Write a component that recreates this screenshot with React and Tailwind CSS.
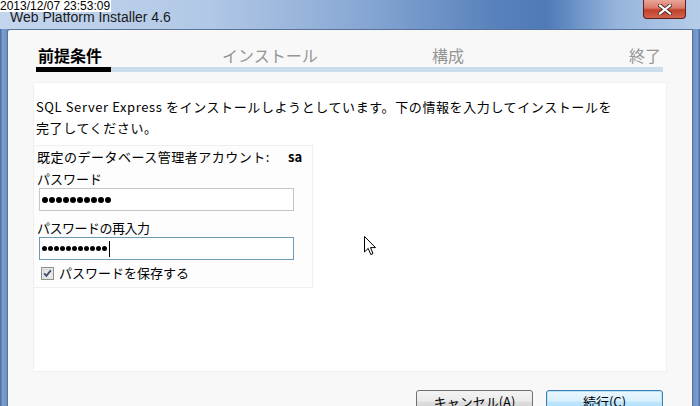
import React from "react";

const jp = "font-['Noto_Sans_CJK_JP','Noto_Sans',sans-serif]";

const Dots = ({ count, size, caret }) => (
  <div className="flex items-center gap-[1px] pl-[2px] h-full">
    {Array.from({ length: count }).map((_, i) => (
      <span key={i} className={`${size} rounded-full bg-black`} />
    ))}
    {caret && <span className="ml-[1px] w-[1px] h-[16px] bg-black" />}
  </div>
);

const CheckBox = () => (
  <svg width="13" height="13" viewBox="0 0 13 13">
    <defs>
      <linearGradient id="cb" x1="0" y1="0" x2="1" y2="1">
        <stop offset="0" stopColor="#dcdcdc" />
        <stop offset="1" stopColor="#f8f8f8" />
      </linearGradient>
    </defs>
    <rect x="0.5" y="0.5" width="12" height="12" fill="#f4f4f4" stroke="#8f8f8f" />
    <rect x="2" y="2" width="9" height="9" fill="url(#cb)" stroke="#c6c6c6" strokeWidth="0.6" />
    <path d="M3.2 6.4 L5.4 8.8 L9.8 3.4" fill="none" stroke="#3f4b6e" strokeWidth="1.8" />
  </svg>
);

const Cursor = () => (
  <svg width="13" height="20" viewBox="0 0 13 20" className="absolute left-[364px] top-[236px]">
    <path
      d="M0.5 0.5 L0.5 16 L4.2 12.4 L6.8 18.6 L9 17.6 L6.5 11.6 L11.5 11.6 Z"
      fill="#ffffff"
      stroke="#000000"
      strokeWidth="1"
      strokeLinejoin="miter"
    />
  </svg>
);

const App = () => {
  return (
    <div className="relative w-[700px] h-[406px] overflow-hidden bg-[#6e92c4]">
      {/* title bar */}
      <div className="h-[29px] flex items-center bg-[linear-gradient(90deg,#c4d6ed_0%,#b1c8e6_30%,#87a7d3_52%,#5a83bd_70%,#4e7ab7_78%,#96b4dc_88%,#b6cce9_100%)]">
        <span className="pl-[10px] pt-[5px] text-[14px] text-[#1a1a1a] font-['Liberation_Sans',sans-serif]">
          Web Platform Installer 4.6
        </span>
        <div className="ml-auto mr-[14px] self-start w-[43px] h-[19px] rounded-b-[4px] border border-t-0 border-[#5a2219] bg-[linear-gradient(180deg,#e9a699_0%,#d9786a_45%,#c2402c_55%,#d0634f_100%)] flex items-center justify-center">
          <svg width="14" height="11" viewBox="0 0 14 11">
            <path d="M2 1.5 L12 9.5 M12 1.5 L2 9.5" stroke="#4a2a26" strokeWidth="4" strokeLinecap="square" />
            <path d="M2 1.5 L12 9.5 M12 1.5 L2 9.5" stroke="#ffffff" strokeWidth="2.2" strokeLinecap="square" />
          </svg>
        </div>
      </div>

      {/* body */}
      <div className="flex h-[377px]">
        <div className="w-[7px] bg-[linear-gradient(90deg,#46689b_0%,#7d9fd0_40%,#6a8ec3_100%)]" />
        <div className={`w-[686px] flex flex-col overflow-hidden bg-[#f8f8f8] border-l border-t border-r border-[#57739b] rounded-tl-[3px] px-[25px] pt-[15px] ${jp}`}>
          {/* steps */}
          <div className="shrink-0 flex pl-[3px] pr-[4px] text-[16px] leading-[20px]">
            <div className="w-[186px] pl-[2px] font-bold text-black">前提条件</div>
            <div className="w-[210px] text-[#959595]">インストール</div>
            <div className="flex-1 text-[#959595]">構成</div>
            <div className="text-[#959595] pr-[2px]">終了</div>
          </div>
          <div className="shrink-0 ml-[3px] mr-[4px] mt-[2px] h-[5px] bg-[#cbdceb] flex">
            <div className="w-[75px] bg-black" />
          </div>

          {/* content panel */}
          <div className="shrink-0 mt-[10px] h-[290px] bg-white border border-[#f0f0f0] pt-[13px] text-[13px] text-black">
            <div className="pl-[2px] leading-[21px] tracking-[0.6px]">
              <p>SQL Server Express をインストールしようとしています。下の情報を入力してインストールを</p>
              <p>完了してください。</p>
            </div>

            <div className="mt-[7px] -ml-px w-[280px] h-[143px] border border-[#efefef] bg-[#fdfdfd] pl-[3px] pt-[2px]">
              <div className="leading-[18px] flex">
                <span className="tracking-[0.5px]">既定のデータベース管理者アカウント:</span>
                <span className="ml-[18px] font-bold">sa</span>
              </div>
              <div className="mt-[4px] leading-[18px]">パスワード</div>
              <div className="ml-[2px] w-[255px] h-[23px] border border-[#c5c5c5] bg-white">
                <Dots count={10} size="w-[6px] h-[6px]" />
              </div>
              <div className="mt-[8px] leading-[18px] tracking-[-0.5px]">パスワードの再入力</div>
              <div className="ml-[2px] w-[255px] h-[23px] border border-[#6c9bb8] bg-white">
                <Dots count={11} size="w-[5px] h-[5px]" caret />
              </div>
              <div className="mt-[4px] ml-[4px] h-[18px] flex items-center gap-[5px] leading-[18px]">
                <CheckBox />
                <span>パスワードを保存する</span>
              </div>
            </div>
          </div>

          {/* footer buttons */}
          <div className="shrink-0 mt-[18px] flex justify-end gap-[13px] pr-[4px] text-[13px]">
            <button className="w-[117px] h-[23px] rounded-[3px] border border-[#707070] bg-[linear-gradient(180deg,#f3f3f3_0%,#ebebeb_48%,#dddddd_52%,#cfcfcf_100%)] text-black leading-[21px]">
              キャンセル(A)
            </button>
            <button className="w-[117px] h-[23px] rounded-[3px] border border-[#3c7fb1] bg-[linear-gradient(180deg,#eaf6fd_0%,#d9f0fc_48%,#bee6fd_52%,#a7d9f5_100%)] shadow-[inset_0_0_0_1px_#b8e3f8] text-black leading-[21px]">
              続行(C)
            </button>
          </div>
        </div>
        <div className="flex-1 bg-[linear-gradient(90deg,#6a8ec3_0%,#7d9fd0_60%,#46689b_100%)]" />
      </div>

      {/* screen capture timestamp overlay */}
      <div className="absolute left-0 top-0 bg-white pr-[1px] text-[12px] leading-[12px] text-black font-['Liberation_Sans',sans-serif]">
        2013/12/07 23:53:09
      </div>

      <Cursor />
    </div>
  );
};

export default App;
